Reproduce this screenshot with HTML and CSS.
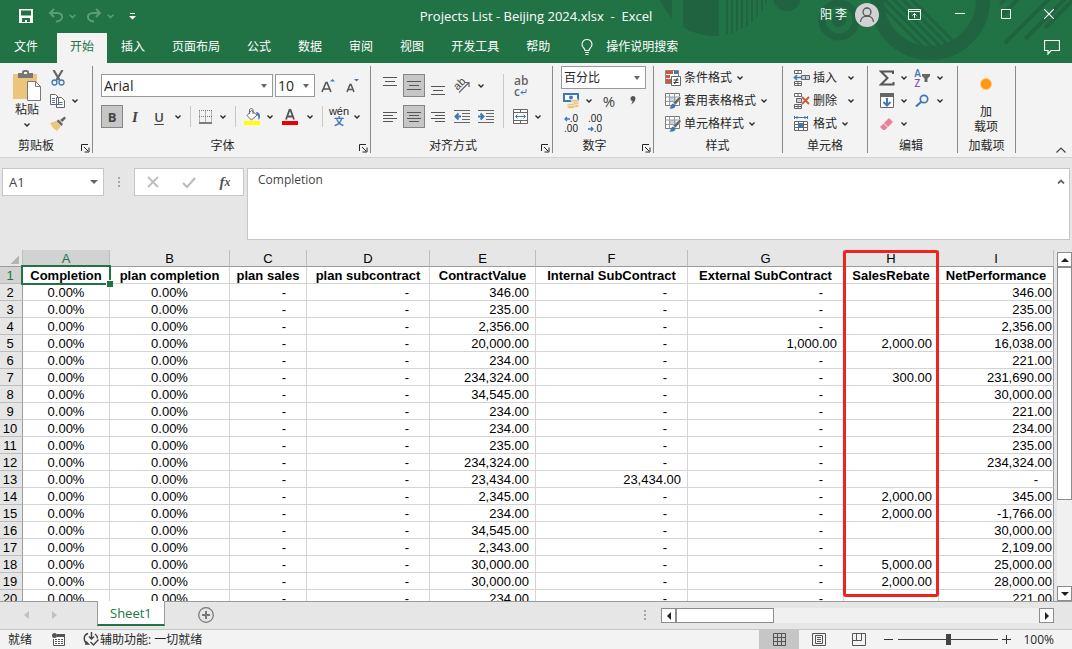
FILE: index.html
```html
<!DOCTYPE html>
<html lang="zh-CN">
<head>
<meta charset="utf-8">
<title>Projects List - Beijing 2024.xlsx - Excel</title>
<link rel="stylesheet" href="styles.css">
</head>
<body>
<svg class="defs" aria-hidden="true">
  <symbol id="chev" viewBox="0 0 8 8"><path d="M1.500 2.500 4 5l2.500-2.500" fill="none" stroke="currentColor" stroke-width="1.300"/></symbol>
  <symbol id="launch" viewBox="0 0 9 9"><path d="M.5 7V.5H7M3 3l4 4M8 3.500V8H3.500" fill="none" stroke="currentColor"/></symbol>
  <symbol id="tablebrush" viewBox="0 0 16 16"><path d="M.5.5h14v12H.5z" fill="#fff" stroke="#777"/><path d="M4 4h7v5H4z" fill="#c3d3e6"/><path d="M.5 4h14M.5 8.500h14M4.500.5v12M9.500.5v12" stroke="#999" fill="none"/><path d="M15 3 8 9.500l2.500 2.500L16 5.500z" fill="#666" stroke="#f3f3f3" stroke-width=".5"/><path d="M4 15.500c2 0 1.500-4.500 4-5l2.500 2c0 3-3.500 3.500-6.500 3z" fill="#3f78b5"/></symbol>
</svg>

<header class="top">
  <svg class="decor" width="432" height="63" viewBox="640 0 432 63" aria-hidden="true">
    <defs>
      <clipPath id="c1"><circle cx="714" cy="-22" r="58"/></clipPath>
      <clipPath id="c2"><circle cx="930" cy="0" r="46"/></clipPath>
    </defs>
    <g fill="#1f6340" clip-path="url(#c1)">
      <path d="M656 0h16v40h-16zM683 0h36v40h-36zM726 0h2v40h-2zM731 0h2v40h-2zM736 0h2v40h-2zM741 0h2v40h-2zM746 0h2v40h-2zM751 0h2v40h-2zM756 0h2v40h-2zM761 0h2v40h-2zM765 0h2v40h-2z"/>
    </g>
    <circle cx="787" cy="-3" r="14" fill="#1f6340"/>
    <circle cx="839" cy="20" r="17" fill="none" stroke="#1f6340" stroke-width="7"/>
    <circle cx="839" cy="20" r="7" fill="#1f6340"/>
    <circle cx="930" cy="0" r="53" fill="none" stroke="#1f6340" stroke-width="14"/>
    <g stroke="#1f6340" stroke-width="3" clip-path="url(#c2)"><path d="M870-6l60 60M879-6l60 60M888-6l60 60M897-6l60 60M906-6l60 60"/></g>
    <g stroke="#1f6340" stroke-width="4"><path d="M1000 4l8-8M1002 15l20-20M1005 43l48-48M1025 39l44-44M1045 28l32-32"/></g>
  </svg>

  <div class="titlebar">
    <div class="qat">
      <button class="qbtn" aria-label="保存"><svg width="16" height="16" viewBox="0 0 16 16"><path d="M1 1h14v14H1z" fill="#fff"/><path d="M3 2.500h10v5H3zM4 10h8v4H9v-2H7v2H4z" fill="#217346"/></svg></button>
      <button class="qbtn dim undo" aria-label="撤消"><svg width="16" height="16" viewBox="0 0 16 16"><path d="M6 1 2 5l4 4M2 5h7c7 0 7 8-1 8.500" fill="none" stroke="currentColor" stroke-width="2"/></svg></button>
      <button class="qchev dim" aria-label="撤消列表"><svg width="9" height="9"><use href="#chev"/></svg></button>
      <button class="qbtn dim redo" aria-label="恢复"><svg width="16" height="16" viewBox="0 0 16 16"><path d="M10 1l4 4-4 4M14 5H7c-7 0-7 8 1 8.500" fill="none" stroke="currentColor" stroke-width="2"/></svg></button>
      <button class="qchev dim" aria-label="恢复列表"><svg width="9" height="9"><use href="#chev"/></svg></button>
      <button class="qbtn custom" aria-label="自定义快速访问工具栏"><svg width="7" height="7" viewBox="0 0 7 7"><path d="M1 0h5v1H1zM0 3h7L3.500 6.500z" fill="#fff"/></svg></button>
    </div>
    <h1 class="title">Projects List - Beijing 2024.xlsx&nbsp; -&nbsp; Excel</h1>
    <div class="winctl">
      <span class="user">阳 李</span>
      <svg class="avatar" width="24" height="24" viewBox="0 0 24 24"><circle cx="12" cy="12" r="12" fill="#d2d2d2"/><circle cx="12" cy="9" r="4" fill="none" stroke="#555" stroke-width="1.300"/><path d="M5.500 19c.5-8 12.500-8 13 0" fill="none" stroke="#555" stroke-width="1.300"/></svg>
      <button class="wbtn" aria-label="功能区显示选项"><svg width="13" height="11" viewBox="0 0 13 11"><path d="M.5.500h12v10H.5zM.5 2.500h12M6.500 9V4.500M4.500 6.500l2-2 2 2" fill="none" stroke="#fff"/></svg></button>
      <button class="wbtn" aria-label="最小化"><svg width="10" height="10"><path d="M0 4.500h10" stroke="#fff"/></svg></button>
      <button class="wbtn" aria-label="最大化"><svg width="10" height="10"><path d="M.5.500h9v9h-9z" fill="none" stroke="#fff"/></svg></button>
      <button class="wbtn close" aria-label="关闭"><svg width="10" height="10"><path d="M0 0l10 10M10 0 0 10" stroke="#fff" stroke-width="1.200"/></svg></button>
    </div>
  </div>

  <nav class="tabs">
    <button class="tab file">文件</button>
    <button class="tab active">开始</button>
    <button class="tab">插入</button>
    <button class="tab">页面布局</button>
    <button class="tab">公式</button>
    <button class="tab">数据</button>
    <button class="tab">审阅</button>
    <button class="tab">视图</button>
    <button class="tab">开发工具</button>
    <button class="tab">帮助</button>
    <button class="tell"><svg width="12" height="16" viewBox="0 0 12 16"><path d="M4 11.500C4 9 1 8.500 1 5.500a5 5 0 0 1 10 0C11 8.500 8 9 8 11.500zM4 13.500h4M4.500 15.500h3" fill="none" stroke="#fff" stroke-width="1.100"/></svg>操作说明搜索</button>
    <button class="comment" aria-label="批注"><svg width="16" height="15" viewBox="0 0 16 15"><path d="M.5.500h15v10H7l-3 3.500v-3.500H.5z" fill="none" stroke="#fff" stroke-width="1.200"/></svg></button>
  </nav>
</header>

<section class="ribbon">
  <div class="group g-clip">
    <div class="gbody">
      <button class="paste">
        <svg width="30" height="31" viewBox="0 0 30 31"><path d="M1 4h24v25H1z" fill="#ecc57c"/><path d="M6 3h4V1l2-1h3l2 1v2h4v5H6z" fill="#777"/><path d="M12 2h3v2h-3z" fill="#f3f3f3"/><path d="M15.500 11.500h8l5 5v14h-13z" fill="#fff" stroke="#777"/><path d="M23.500 11.500v5h5" fill="none" stroke="#777"/></svg>
        <span>粘贴</span>
        <svg width="8" height="8"><use href="#chev"/></svg>
      </button>
      <div class="rows">
        <div class="row"><button class="t16" aria-label="剪切"><svg width="16" height="16" viewBox="0 0 16 16"><path d="M3.500 0l6 10M12.500 0l-6 10" stroke="#666" stroke-width="2.200"/><circle cx="4.500" cy="12.500" r="2.500" fill="none" stroke="#3f78b5" stroke-width="1.300"/><circle cx="11.500" cy="12.500" r="2.500" fill="none" stroke="#3f78b5" stroke-width="1.300"/></svg></button></div>
        <div class="row"><button class="t16" aria-label="复制"><svg width="16" height="16" viewBox="0 0 16 16"><path d="M.5 1.500h5l3 3v7h-8zM6.500 4.500h5l3 3v7h-8z" fill="#fff" stroke="#666"/><path d="M2 5.500h3M2 7.500h3M2 9.500h3M8.500 9.500h4M8.500 11.500h4" stroke="#3f78b5"/></svg></button><button class="chev wide" aria-label="复制选项"><svg width="8" height="8"><use href="#chev"/></svg></button></div>
        <div class="row"><button class="t16" aria-label="格式刷"><svg width="16" height="16" viewBox="0 0 16 16"><path d="M0 7l6-2 5 5-4 5c-2-1-5-4-7-8z" fill="#ecc57c"/><path d="M6.500 5l2-1.500 4.500 4.500-1.500 2zM10 4l4.500-3.500L16 2l-3.500 4z" fill="#666"/></svg></button></div>
      </div>
    </div>
    <div class="glabel">剪贴板<button class="launch" aria-label="剪贴板设置"><svg width="9" height="9"><use href="#launch"/></svg></button></div>
  </div>

  <div class="group g-font">
    <div class="gbody two">
      <div class="row">
        <span class="combo w-font"><select aria-label="字体"><option>Arial</option></select></span>
        <span class="combo w-size"><select aria-label="字号"><option>10</option></select></span>
        <button class="t26" aria-label="增大字号"><svg width="14" height="15" viewBox="0 0 14 15"><path d="M1 14 5 4.500h1L10 14M2.500 11h6" fill="none" stroke="#555" stroke-width="1.600"/><path d="M9 3.500 11.500 1 14 3.500z" fill="#3f78b5"/></svg></button>
        <button class="t22" aria-label="减小字号"><svg width="14" height="15" viewBox="0 0 14 15"><path d="M2 14 5 6.500h1L9 14M3 11.500h5" fill="none" stroke="#555" stroke-width="1.500"/><path d="M9 1h5l-2.500 2.500z" fill="#3f78b5"/></svg></button>
      </div>
      <div class="row">
        <button class="t22 on letter b">B</button>
        <button class="t24 letter i">I</button>
        <button class="t24 letter u">U</button>
        <button class="chev" aria-label="下划线选项"><svg width="8" height="8"><use href="#chev"/></svg></button>
        <span class="sep"></span>
        <button class="t20" aria-label="边框"><svg width="14" height="14" viewBox="0 0 14 14"><path d="M.5.500v12M12.500.500v12M6.500.500v12M0 .5h13M0 6.500h13" stroke="#777" stroke-dasharray="1 1"/><path d="M0 13h13" stroke="#555" stroke-width="1.500"/></svg></button>
        <button class="chev" aria-label="边框选项"><svg width="8" height="8"><use href="#chev"/></svg></button>
        <span class="sep"></span>
        <button class="t22" aria-label="填充颜色"><svg width="17" height="17" viewBox="0 0 17 17"><path d="M7.500 2.500 13 7l-5.500 5L3 7.500z" fill="#fff" stroke="#666"/><path d="M5.500 6V2c0-2 3.500-2 3.500 0v4" fill="none" stroke="#666"/><path d="M12 4c4 0 5 4 3 8-1-1 0-4-2-5z" fill="#3f78b5"/><path d="M0 13h16v4H0z" fill="#ff0"/></svg></button>
        <button class="chev" aria-label="填充颜色选项"><svg width="8" height="8"><use href="#chev"/></svg></button>
        <button class="t26" aria-label="字体颜色"><svg width="16" height="17" viewBox="0 0 16 17"><path d="M4 11.500 7.500 2h1L12 11.500M5.500 8.500h5" fill="none" stroke="#555" stroke-width="1.800"/><path d="M0 13h16v4H0z" fill="#e00"/></svg></button>
        <button class="chev" aria-label="字体颜色选项"><svg width="8" height="8"><use href="#chev"/></svg></button>
        <span class="sep"></span>
        <button class="t22 wen" aria-label="拼音"><span>wén</span><span class="zi">文</span></button>
        <button class="chev" aria-label="拼音选项"><svg width="8" height="8"><use href="#chev"/></svg></button>
      </div>
    </div>
    <div class="glabel">字体<button class="launch" aria-label="字体设置"><svg width="9" height="9"><use href="#launch"/></svg></button></div>
  </div>

  <div class="group g-align">
    <div class="gbody two">
      <div class="cols">
        <div class="stack">
          <div class="row">
            <button class="t24" aria-label="顶端对齐"><svg width="14" height="18"><path d="M0 .5h14M2 4.500h10M0 8.500h14" stroke="#555"/></svg></button>
            <button class="t22 on m1" aria-label="垂直居中"><svg width="14" height="18"><path d="M0 4.500h14M2 8.500h10M0 12.500h14" stroke="#555"/></svg></button>
            <button class="t24" aria-label="底端对齐"><svg width="14" height="18"><path d="M0 9.500h14M2 13.500h10M0 17.500h14" stroke="#555"/></svg></button>
            <button class="t24" aria-label="方向"><svg class="vis" width="16" height="17" viewBox="0 0 16 17"><text x="0" y="11" transform="rotate(-45 5 8)" class="svgab">ab</text><path d="M5 15.500 14.500 6M10.500 5.500h4.500V10" fill="none" stroke="#666" stroke-width="1.200"/></svg></button>
            <button class="chev" aria-label="方向选项"><svg width="8" height="8"><use href="#chev"/></svg></button>
          </div>
          <div class="row">
            <button class="t24" aria-label="左对齐"><svg width="14" height="12"><path d="M0 1.500h14M0 4.500h10M0 7.500h14M0 10.500h10" stroke="#555"/></svg></button>
            <button class="t22 on m1" aria-label="居中"><svg width="14" height="12"><path d="M0 1.500h14M2 4.500h10M0 7.500h14M2 10.500h10" stroke="#555"/></svg></button>
            <button class="t24" aria-label="右对齐"><svg width="14" height="12"><path d="M0 1.500h14M4 4.500h10M0 7.500h14M4 10.500h10" stroke="#555"/></svg></button>
            <button class="t24" aria-label="减少缩进"><svg width="16" height="13"><path d="M0 .5h16M8 3.500h8M8 6.500h8M8 9.500h8M0 12.500h16" stroke="#666"/><path d="M7 6.500H2M4.500 3.500l-3 3 3 3" fill="none" stroke="#3f78b5" stroke-width="2"/></svg></button>
            <button class="t24" aria-label="增加缩进"><svg width="16" height="13"><path d="M0 .5h16M8 3.500h8M8 6.500h8M8 9.500h8M0 12.500h16" stroke="#666"/><path d="M0 6.500h5M2.500 3.500l3 3-3 3" fill="none" stroke="#3f78b5" stroke-width="2"/></svg></button>
          </div>
        </div>
        <span class="sep tall"></span>
        <div class="stack">
          <div class="row"><button class="t22 wrap" aria-label="自动换行"><span>ab</span><span>c<svg width="7" height="8"><path d="M6 0v3.500H1M3 1.500l-2 2 2 2" fill="none" stroke="#3f78b5"/></svg></span></button></div>
          <div class="row"><button class="t22" aria-label="合并后居中"><svg width="15" height="15"><path d="M.5.500h14v14H.5z" fill="#fff" stroke="#666"/><path d="M.5 3.500h14M.5 11.500h14M7.500.500v3M7.500 11.500v3" stroke="#666"/><path d="M2.500 7.500h10M4.500 5.500l-2 2 2 2M10.500 5.500l2 2-2 2" fill="none" stroke="#3f78b5"/></svg></button><button class="chev" aria-label="合并选项"><svg width="8" height="8"><use href="#chev"/></svg></button></div>
        </div>
      </div>
    </div>
    <div class="glabel">对齐方式<button class="launch" aria-label="对齐设置"><svg width="9" height="9"><use href="#launch"/></svg></button></div>
  </div>

  <div class="group g-num">
    <div class="gbody">
      <div class="rows">
        <div class="row"><span class="combo w-num"><select aria-label="数字格式"><option>百分比</option></select></span></div>
        <div class="row"><button class="t22" aria-label="会计数字格式"><svg width="17" height="16" viewBox="0 0 17 16"><path d="M0 0h16v9H0z" fill="#3f78b5"/><path d="M2 2h12v5H2z" fill="#fff"/><circle cx="8" cy="4.500" r="2" fill="#3f78b5"/><g fill="#ecc57c" stroke="#f3f3f3" stroke-width=".6"><ellipse cx="12" cy="8" rx="4" ry="1.700"/><ellipse cx="12" cy="10.500" rx="4" ry="1.700"/><ellipse cx="12" cy="13" rx="4" ry="1.700"/><ellipse cx="8" cy="12" rx="4" ry="1.700"/><ellipse cx="8" cy="14" rx="4" ry="1.700"/></g></svg></button><button class="chev" aria-label="会计格式选项"><svg width="8" height="8"><use href="#chev"/></svg></button><button class="t26 pct">%</button><button class="t22 comma" aria-label="千位分隔"><svg width="6" height="9"><path d="M3 0c4 0 3 6-2 8.500C2 7 2.500 6 2.500 5-.5 5 0 0 3 0z" fill="#555"/></svg></button></div>
        <div class="row"><button class="t22 dec" aria-label="增加小数位数"><span><svg width="6" height="6"><path d="M6 3H1M3 1 1 3l2 2" fill="none" stroke="#3f78b5" stroke-width="1.300"/></svg>.0</span><span>.00</span></button><button class="t24 dec" aria-label="减少小数位数"><span>.00</span><span><svg width="6" height="6"><path d="M0 3h5M3 1l2 2-2 2" fill="none" stroke="#3f78b5" stroke-width="1.300"/></svg>.0</span></button></div>
      </div>
    </div>
    <div class="glabel">数字<button class="launch" aria-label="数字设置"><svg width="9" height="9"><use href="#launch"/></svg></button></div>
  </div>

  <div class="group g-style">
    <div class="gbody">
      <div class="rows">
        <button class="cmd"><svg width="16" height="16" viewBox="0 0 16 16"><path d="M.5.500h13v13H.5z" fill="#fff" stroke="#888"/><path d="M1 1h7v3H1zM1 5h4v3H1zM1 9h6v4H1z" fill="#d0573c"/><path d="M9 1h4v3H9z" fill="#3f78b5"/><path d="M6.500 6.500h9v9h-9z" fill="#fff" stroke="#666"/><path d="M8.500 10h5M8.500 12.500h5M12.500 8l-3 6" stroke="#333"/></svg>条件格式<svg class="cv" width="8" height="8"><use href="#chev"/></svg></button>
        <button class="cmd"><svg width="16" height="16"><use href="#tablebrush"/></svg>套用表格格式<svg class="cv" width="8" height="8"><use href="#chev"/></svg></button>
        <button class="cmd"><svg width="16" height="16"><use href="#tablebrush"/></svg>单元格样式<svg class="cv" width="8" height="8"><use href="#chev"/></svg></button>
      </div>
    </div>
    <div class="glabel">样式</div>
  </div>

  <div class="group g-cell">
    <div class="gbody">
      <div class="rows">
        <button class="cmd"><svg width="17" height="16" viewBox="0 0 17 16"><path d="M1.500.500h7v3h-7zM5 .5v3M1.500 11.500h7v4h-7zM5 11.500v4M1.500 13.500h7M1 7.500h3" fill="#fff" stroke="#666"/><path d="M8.500 5.500h8v4h-8zM12.500 5.500v4" fill="#c3d3e6" stroke="#666"/><path d="M8 7.500H2M4 5 1.500 7.500 4 10" fill="none" stroke="#3f78b5" stroke-width="1.600"/></svg>插入<svg class="cv far" width="8" height="8"><use href="#chev"/></svg></button>
        <button class="cmd"><svg width="17" height="16" viewBox="0 0 17 16"><path d="M1.500.500h7v3h-7zM5 .5v3M1.500 11.500h7v4h-7zM5 11.500v4M1.500 13.500h7" fill="#fff" stroke="#666"/><path d="M3.500 5.500h5v4h-5z" fill="#c3d3e6" stroke="#666"/><path d="M9 4l7 7M16 4l-7 7" stroke="#d0573c" stroke-width="1.800"/></svg>删除<svg class="cv far" width="8" height="8"><use href="#chev"/></svg></button>
        <button class="cmd"><svg width="17" height="16" viewBox="0 0 17 16"><path d="M1.500 5.500h13v9h-13zM1.500 8.500h13M1.500 11.500h13M5.500 5.500v9M10.500 5.500v9" fill="#fff" stroke="#666"/><path d="M5 7h5v4H5z" fill="#3f78b5"/><path d="M2 1.500h12M1.500 0v3M14.500 0v3M4.500 0 3 1.500 4.500 3M11.500 0 13 1.500 11.500 3" fill="none" stroke="#3f78b5"/></svg>格式<svg class="cv" width="8" height="8"><use href="#chev"/></svg></button>
      </div>
    </div>
    <div class="glabel">单元格</div>
  </div>

  <div class="group g-edit">
    <div class="gbody">
      <div class="rows">
        <div class="row"><button class="t20" aria-label="求和"><svg width="16" height="16" viewBox="0 0 16 16"><path d="M14 4V1.500H2L8.500 8 2 14.500h12.500V12" fill="none" stroke="#555" stroke-width="2"/></svg></button><button class="chev" aria-label="求和选项"><svg width="8" height="8"><use href="#chev"/></svg></button><button class="t22 sort" aria-label="排序和筛选"><span class="az"><b>A</b><i>Z</i></span><svg width="8" height="8"><path d="M0 0h8v2L5.500 4.500V8h-3V4.500L0 2z" fill="#666"/></svg></button><button class="chev" aria-label="排序选项"><svg width="8" height="8"><use href="#chev"/></svg></button></div>
        <div class="row"><button class="t20" aria-label="填充"><svg width="14" height="15"><path d="M.5.500h13v14H.5z" fill="#fff" stroke="#666"/><path d="M0 0h14v4H0z" fill="#666"/><path d="M7 5v7M3.500 9 7 12.500 10.500 9" fill="none" stroke="#3f78b5" stroke-width="2"/></svg></button><button class="chev" aria-label="填充选项"><svg width="8" height="8"><use href="#chev"/></svg></button><button class="t22" aria-label="查找和选择"><svg width="14" height="14"><circle cx="9" cy="5" r="3.700" fill="none" stroke="#3f78b5" stroke-width="1.700"/><path d="M6.500 7.500 1 12.500" stroke="#3f78b5" stroke-width="2.200"/></svg></button><button class="chev" aria-label="查找选项"><svg width="8" height="8"><use href="#chev"/></svg></button></div>
        <div class="row"><button class="t20" aria-label="清除"><svg width="14" height="14"><path d="M9 1l4 4-5 5-4-4z" fill="#e8829a"/><path d="M3.500 6.500l4 4L5 13H3L.5 10.500v-1z" fill="#e8829a"/></svg></button><button class="chev" aria-label="清除选项"><svg width="8" height="8"><use href="#chev"/></svg></button></div>
      </div>
    </div>
    <div class="glabel">编辑</div>
  </div>

  <div class="group g-add">
    <button class="addin"><span class="dot"></span><span>加<br>载项</span></button>
    <div class="glabel">加载项</div>
  </div>
  <button class="collapse" aria-label="折叠功能区"><svg width="10" height="6"><path d="M.5 5.500 5 1l4.500 4.500" fill="none" stroke="#444" stroke-width="1.200"/></svg></button>
</section>

<section class="fbar">
  <div class="namebox"><input type="text" value="A1" aria-label="名称框"><span class="tri"></span></div>
  <span class="dots"><i></i><i></i><i></i></span>
  <div class="fxbox">
    <button aria-label="取消"><svg width="12" height="12"><path d="M1 1l10 10M11 1 1 11" stroke="#bdbdbd" stroke-width="1.800"/></svg></button>
    <button aria-label="输入"><svg width="14" height="11"><path d="M1 6l4 4 8-9" fill="none" stroke="#bdbdbd" stroke-width="2.200"/></svg></button>
    <button class="fx" aria-label="插入函数">f<small>x</small></button>
  </div>
  <div class="formula"><textarea aria-label="编辑栏">Completion</textarea><button aria-label="折叠编辑栏"><svg width="8" height="5"><path d="M1 4.500 4 1.500l3 3" fill="none" stroke="#666" stroke-width="1.800"/></svg></button></div>
</section>

<main class="sheet">
  <div class="gridwrap">
    <table class="grid">
      <colgroup><col class="k0"><col class="kA"><col class="kB"><col class="kC"><col class="kD"><col class="kE"><col class="kF"><col class="kG"><col class="kH"><col class="kI"></colgroup>
      <thead><tr><th class="corner"><span></span></th><th class="sel">A</th><th>B</th><th>C</th><th>D</th><th>E</th><th>F</th><th>G</th><th>H</th><th>I</th></tr></thead>
      <tbody>
        <tr class="heads"><th class="sel">1</th><td class="cur">Completion</td><td>plan completion</td><td>plan sales</td><td>plan subcontract</td><td>ContractValue</td><td>Internal SubContract</td><td>External SubContract</td><td>SalesRebate</td><td>NetPerformance</td></tr>
        <tr><th>2</th><td>0.00%</td><td>0.00%</td><td class="d">-</td><td class="d">-</td><td>346.00</td><td class="d">-</td><td class="d">-</td><td></td><td>346.00</td></tr>
        <tr><th>3</th><td>0.00%</td><td>0.00%</td><td class="d">-</td><td class="d">-</td><td>235.00</td><td class="d">-</td><td class="d">-</td><td></td><td>235.00</td></tr>
        <tr><th>4</th><td>0.00%</td><td>0.00%</td><td class="d">-</td><td class="d">-</td><td>2,356.00</td><td class="d">-</td><td class="d">-</td><td></td><td>2,356.00</td></tr>
        <tr><th>5</th><td>0.00%</td><td>0.00%</td><td class="d">-</td><td class="d">-</td><td>20,000.00</td><td class="d">-</td><td>1,000.00</td><td>2,000.00</td><td>16,038.00</td></tr>
        <tr><th>6</th><td>0.00%</td><td>0.00%</td><td class="d">-</td><td class="d">-</td><td>234.00</td><td class="d">-</td><td class="d">-</td><td></td><td>221.00</td></tr>
        <tr><th>7</th><td>0.00%</td><td>0.00%</td><td class="d">-</td><td class="d">-</td><td>234,324.00</td><td class="d">-</td><td class="d">-</td><td>300.00</td><td>231,690.00</td></tr>
        <tr><th>8</th><td>0.00%</td><td>0.00%</td><td class="d">-</td><td class="d">-</td><td>34,545.00</td><td class="d">-</td><td class="d">-</td><td></td><td>30,000.00</td></tr>
        <tr><th>9</th><td>0.00%</td><td>0.00%</td><td class="d">-</td><td class="d">-</td><td>234.00</td><td class="d">-</td><td class="d">-</td><td></td><td>221.00</td></tr>
        <tr><th>10</th><td>0.00%</td><td>0.00%</td><td class="d">-</td><td class="d">-</td><td>234.00</td><td class="d">-</td><td class="d">-</td><td></td><td>234.00</td></tr>
        <tr><th>11</th><td>0.00%</td><td>0.00%</td><td class="d">-</td><td class="d">-</td><td>235.00</td><td class="d">-</td><td class="d">-</td><td></td><td>235.00</td></tr>
        <tr><th>12</th><td>0.00%</td><td>0.00%</td><td class="d">-</td><td class="d">-</td><td>234,324.00</td><td class="d">-</td><td class="d">-</td><td></td><td>234,324.00</td></tr>
        <tr><th>13</th><td>0.00%</td><td>0.00%</td><td class="d">-</td><td class="d">-</td><td>23,434.00</td><td>23,434.00</td><td class="d">-</td><td></td><td class="d">-</td></tr>
        <tr><th>14</th><td>0.00%</td><td>0.00%</td><td class="d">-</td><td class="d">-</td><td>2,345.00</td><td class="d">-</td><td class="d">-</td><td>2,000.00</td><td>345.00</td></tr>
        <tr><th>15</th><td>0.00%</td><td>0.00%</td><td class="d">-</td><td class="d">-</td><td>234.00</td><td class="d">-</td><td class="d">-</td><td>2,000.00</td><td>-1,766.00</td></tr>
        <tr><th>16</th><td>0.00%</td><td>0.00%</td><td class="d">-</td><td class="d">-</td><td>34,545.00</td><td class="d">-</td><td class="d">-</td><td></td><td>30,000.00</td></tr>
        <tr><th>17</th><td>0.00%</td><td>0.00%</td><td class="d">-</td><td class="d">-</td><td>2,343.00</td><td class="d">-</td><td class="d">-</td><td></td><td>2,109.00</td></tr>
        <tr><th>18</th><td>0.00%</td><td>0.00%</td><td class="d">-</td><td class="d">-</td><td>30,000.00</td><td class="d">-</td><td class="d">-</td><td>5,000.00</td><td>25,000.00</td></tr>
        <tr><th>19</th><td>0.00%</td><td>0.00%</td><td class="d">-</td><td class="d">-</td><td>30,000.00</td><td class="d">-</td><td class="d">-</td><td>2,000.00</td><td>28,000.00</td></tr>
        <tr><th>20</th><td>0.00%</td><td>0.00%</td><td class="d">-</td><td class="d">-</td><td>234.00</td><td class="d">-</td><td class="d">-</td><td></td><td>221.00</td></tr>
      </tbody>
    </table>
    <div class="selection"></div>
    <div class="redbox"></div>
  </div>
  <div class="vscroll">
    <button class="sb up" aria-label="向上滚动"><span></span></button>
    <div class="vtrack"><div class="vthumb"></div></div>
    <button class="sb down" aria-label="向下滚动"><span></span></button>
  </div>
</main>

<div class="tabbar">
  <button class="nav prev" aria-label="上一个工作表"><span></span></button>
  <button class="nav next" aria-label="下一个工作表"><span></span></button>
  <button class="sheettab">Sheet1</button>
  <button class="addsheet" aria-label="新工作表"><svg width="16" height="16"><circle cx="8" cy="8" r="7.300" fill="none" stroke="#777" stroke-width="1.200"/><path d="M8 4v8M4 8h8" stroke="#777" stroke-width="2"/></svg></button>
  <span class="dots low"><i></i><i></i><i></i></span>
  <div class="hscroll">
    <button class="sb left" aria-label="向左滚动"><span></span></button>
    <div class="htrack"><div class="hthumb"></div></div>
    <button class="sb right" aria-label="向右滚动"><span></span></button>
  </div>
</div>

<footer class="status">
  <span class="ready">就绪</span>
  <button class="macro" aria-label="录制宏"><svg width="13" height="13"><path d="M5 1.500h7.500v11h-11V6" fill="#fff" stroke="#555"/><path d="M5 1h8v3H5z" fill="#555"/><circle cx="2.500" cy="2.500" r="2.500" fill="#555"/><path d="M3 6.500h2M6 6.500h2M9 6.500h2M3 8.500h2M6 8.500h2M9 8.500h2M3 10.500h2M6 10.500h2M9 10.500h2" stroke="#555"/></svg></button>
  <button class="acc"><svg width="17" height="15"><path d="M5 1.500C0 3 0 10 5 12M12 2c2 1.500 2.500 3 2.500 4.500M8.500 0v7M6 4.500 8.500 7 11 4.500M3 9.500l2.500 2.500H2M7.500 10l3 3 5-5.500" fill="none" stroke="#444" stroke-width="1.400"/></svg>辅助功能: 一切就绪</button>
  <div class="views">
    <button class="view on" aria-label="普通"><svg width="13" height="13"><path d="M.5.500h12v12H.5zM4.500.500v12M8.500.500v12M.5 4.500h12M.5 8.500h12" fill="none" stroke="#555"/></svg></button>
    <button class="view" aria-label="页面布局"><svg width="14" height="13"><path d="M.5.500h13v12H.5zM3.500 2.500h7v8h-7zM5 4.500h4M5 6.500h4M5 8.500h4" fill="none" stroke="#555"/></svg></button>
    <button class="view" aria-label="分页预览"><svg width="14" height="13"><path d="M.5.500h13v12H.5zM4.500.500v7M9.500.500v7M.5 7.500h9" fill="none" stroke="#555"/></svg></button>
  </div>
  <button class="zb" aria-label="缩小"><svg width="9" height="9"><path d="M0 4.500h9" stroke="#333"/></svg></button>
  <input class="zoom" type="range" min="0" max="100" value="50" aria-label="显示比例">
  <button class="zb plus" aria-label="放大"><svg width="9" height="9"><path d="M0 4.500h9M4.500 0v9" stroke="#333"/></svg></button>
  <span class="pc">100%</span>
</footer>
</body>
</html>
```
FILE: styles.css
```css
* { box-sizing: border-box; }
body {
  margin: 0;
  height: 100vh;
  display: flex;
  flex-direction: column;
  overflow: hidden;
  background: #e6e6e6;
  color: #262626;
  font: 12px/16px "Open Sans", "Noto Sans CJK SC", sans-serif;
}
button, input, select, textarea { font: inherit; color: inherit; margin: 0; padding: 0; border: 0; background: none; border-radius: 0; }
button { display: flex; align-items: center; justify-content: center; flex: none; }
svg { display: block; flex: none; }
.defs { position: absolute; width: 0; height: 0; }
.vis { overflow: visible; }

/* header */
.top { position: relative; background: #217346; color: #fff; flex: none; }
.decor { position: absolute; top: 0; right: 0; }
.titlebar { position: relative; display: grid; grid-template-columns: 1fr auto 1fr; height: 32px; align-items: center; }
.qat { display: flex; align-items: center; padding-left: 18px; }
.qbtn { width: 16px; height: 24px; }
.qchev { width: 16px; height: 24px; }
.undo { margin-left: 14px; }
.redo { margin-left: 6px; }
.custom { margin-left: 6px; }
.dim { color: #5d9c79; }
.title { margin: 0; font-size: 13px; font-weight: 400; white-space: nowrap; }
.winctl { display: flex; align-items: center; justify-content: flex-end; height: 30px; align-self: start; }
.user { margin-right: 8px; }
.avatar { margin-right: 12px; }
.wbtn { width: 46px; height: 30px; padding-bottom: 2px; }
.close { width: 43px; padding-right: 3px; }
.tabs { position: relative; display: flex; padding-top: 1px; height: 31px; gap: 1px; }
.tab { padding: 0 13px 2px; height: 30px; }
.file { padding-left: 14px; margin-right: 5px; }
.active { background: #f3f3f3; color: #217346; }
.tell { gap: 13px; padding: 0 0 2px 17px; }
.comment { margin-left: auto; padding: 0 12px 2px 0; }

/* ribbon */
.ribbon { display: flex; flex: none; background: #f3f3f3; border-bottom: 1px solid #d2d2d2; padding: 3px 0 4px; min-height: 95px; }
.group { display: flex; flex-direction: column; flex: none; border-right: 1px solid #8a8a8a; }
.gbody { display: flex; flex: 1; }
.two { flex-direction: column; gap: 8px; padding-top: 8px; }
.two .row { height: 23px; }
.glabel { position: relative; text-align: center; height: 14px; line-height: 14px; }
.launch { position: absolute; right: 2px; bottom: 0; }
.g-clip { width: 93px; padding-left: 12px; }
.g-clip .glabel { padding-right: 32px; }
.g-font { width: 278px; padding-left: 8px; }
.g-font .glabel { padding-right: 26px; }
.g-align { width: 182px; padding-left: 7px; }
.g-align .glabel { padding-right: 24px; }
.g-num { width: 101px; padding-left: 7px; }
.g-num .glabel { padding-right: 24px; }
.g-style { width: 129px; padding-left: 11px; }
.g-style .glabel { padding-right: 12px; }
.g-cell { width: 85px; padding-left: 10px; }
.g-cell .glabel { padding-right: 10px; }
.g-edit { width: 90px; padding-left: 9px; }
.g-edit .glabel { padding-right: 12px; }
.g-add { width: 58px; }
.collapse { margin-left: auto; align-self: flex-end; padding: 0 6px 0 0; }
.paste { flex-direction: column; justify-content: flex-start; padding-top: 4px; width: 30px; margin-right: 8px; }
.paste svg:last-child { margin-top: 3px; }
.paste span { margin-top: 1px; }
.rows { display: flex; flex-direction: column; }
.rows .row, .rows .cmd { height: 23px; }
.row { display: flex; align-items: center; }
.stack { display: flex; flex-direction: column; gap: 8px; }
.cols { display: flex; }
.t16 { width: 16px; height: 23px; }
.t20 { width: 20px; height: 23px; }
.t22 { width: 22px; height: 23px; }
.t24 { width: 24px; height: 23px; }
.t26 { width: 26px; height: 23px; }
.chev { width: 14px; height: 23px; }
.wide { width: 18px; }
.on { background: #c6c6c6; border: 1px solid #858585; }
.m1 { margin: 0 1px; }
.sep { width: 11px; height: 21px; background: linear-gradient(#c9c9c9, #c9c9c9) center / 1px 100% no-repeat; }
.tall { height: 54px; }
.letter { color: #444; font-size: 13px; }
.b { font-weight: 700; }
.i { font-family: "Liberation Serif", serif; font-style: italic; font-weight: 700; font-size: 15px; }
.u { font-weight: 600; text-decoration: underline; text-underline-offset: 2px; }
.combo { position: relative; display: block; background: #fff; border: 1px solid #999; height: 23px; }
.combo select { appearance: none; width: 100%; height: 21px; padding-left: 2px; outline: 0; font-size: 14px; line-height: 20px; }
.combo::after, .tri { content: ""; position: absolute; right: 5px; top: 9px; border: 3px solid transparent; border-top: 4px solid #666; border-bottom: 0; pointer-events: none; }
.w-font { width: 172px; margin-right: 2px; }
.w-size { width: 40px; }
.w-num { width: 85px; margin-left: 1px; }
.w-num select { font-size: 12px; }
.wen { flex-direction: column; font: 11px/11px "Liberation Sans", "Noto Sans CJK SC", sans-serif; }
.zi { color: #3f78b5; font-size: 10px; font-weight: 700; line-height: 10px; }
.svgab { font: 11px "Liberation Sans", sans-serif; fill: #444; }
.wrap { flex-direction: column; align-items: flex-start; padding-left: 5px; font: 600 12px/11px "Open Sans", sans-serif; color: #666; }
.wrap span { display: flex; align-items: flex-end; }
.pct { font-size: 15px; color: #444; }
.comma { height: 23px; }
.dec { flex-direction: column; align-items: flex-end; font: 10px/10px "Liberation Sans", sans-serif; color: #222; padding-right: 4px; }
.dec span { display: flex; align-items: center; }
.cmd { justify-content: flex-start; gap: 3px; }
.cv { margin-left: 1px; }
.far { margin-left: 7px; }
.sort { gap: 1px; }
.az { display: flex; flex-direction: column; font: 600 10px/10px "Open Sans", sans-serif; color: #3f78b5; }
.az b { font-weight: 600; }
.az i { font-style: normal; color: #8b4fa8; }
.addin { flex-direction: column; justify-content: flex-start; flex: 1; line-height: 15px; padding: 12px 1px 0 0; }
.dot { width: 12px; height: 12px; border-radius: 50%; background: #ff9610; border: 1px solid #ffc57c; margin-bottom: 14px; }

/* formula bar */
.fbar { display: flex; align-items: flex-start; flex: none; padding: 10px 2px 10px; }
.namebox { position: relative; width: 102px; height: 28px; background: #fff; border: 1px solid #c6c6c6; }
.namebox input { width: 80px; height: 26px; padding-left: 6px; color: #444; font-size: 13px; }
.tri { top: 11px; border-width: 4px 4px 0; }
.dots { display: flex; flex-direction: column; gap: 2px; width: 30px; align-items: center; padding-top: 9px; }
.dots i { width: 2px; height: 2px; background: #a6a6a6; }
.fxbox { display: flex; width: 110px; height: 28px; background: #fff; border: 1px solid #c6c6c6; }
.fxbox button { flex: 1; }
.fx { font: italic 700 15px/20px "Liberation Serif", serif; color: #555; }
.fx small { font-size: 12px; }
.formula { display: flex; flex: 1; margin-left: 3px; height: 72px; background: #fff; border: 1px solid #c6c6c6; align-items: flex-start; }
.formula textarea { flex: 1; height: 70px; padding: 3px 10px; resize: none; color: #444; outline: 0; display: block; }
.formula button { padding: 10px 4px 0 0; }

/* grid */
.sheet { display: flex; flex: 1; min-height: 0; border-bottom: 1px solid #9b9b9b; }
.gridwrap { position: relative; flex: 1; overflow: hidden; }
.grid { border-collapse: separate; border-spacing: 0; table-layout: fixed; width: 100%; min-width: 1054px; background: #fff; font: 13px/14px "Liberation Sans", sans-serif; color: #000; }
.k0 { width: 23px; } .kA { width: 87px; } .kB { width: 120px; } .kC { width: 77px; } .kD { width: 123px; }
.kE { width: 106px; } .kF { width: 152px; } .kG { width: 156px; } .kH { width: 95px; }
.grid th, .grid td { height: 17px; padding: 2px 0 0; border-right: 1px solid #d4d4d4; border-bottom: 1px solid #d4d4d4; white-space: nowrap; text-align: right; }
.grid td { padding-right: 6px; }
.grid th { background: #e6e6e6; font-weight: 400; text-align: center; border-color: #bdbdbd; padding-right: 2px; }
.grid tbody th { border-right-color: #9b9b9b; }
.grid thead th { border-bottom-color: #9b9b9b; padding-right: 0; }
.grid th.sel { background: #d2d2d2; color: #217346; }
.grid td:nth-child(2), .grid td:nth-child(3) { text-align: center; padding-right: 0; }
.grid td:last-child { padding-right: 1px; border-right-color: #9b9b9b; }
.grid td.d { padding-right: 20px; }
.grid td.d:last-child { padding-right: 15px; }
.grid .heads td { font-weight: 700; text-align: center; padding-right: 0; }
.corner span { display: block; margin: 0 3px 0 auto; width: 9px; height: 9px; background: linear-gradient(135deg, transparent 50%, #b4b4b4 50%); }
.selection { position: absolute; left: 21px; top: 15px; width: 90px; height: 20px; border: 2px solid #217346; }
.selection::after { content: ""; position: absolute; right: -4px; bottom: -4px; width: 6px; height: 6px; background: #217346; border: 1px solid #fff; border-width: 1px 0 0 1px; }
.redbox { position: absolute; left: 843px; top: 0; width: 96px; bottom: 4px; border: 3px solid #f0231e; border-radius: 3px; }
.vscroll { display: flex; flex-direction: column; flex: none; width: 18px; padding: 2px 0 0 3px; }
.sb { width: 15px; height: 15px; background: #fff; border: 1px solid #8c8c8c; }
.sb span { border: 4px solid transparent; }
.up span { border-bottom-color: #222; border-top: 0; }
.down span { border-top-color: #222; border-bottom: 0; }
.left span { border-right-color: #222; border-left: 0; }
.right span { border-left-color: #222; border-right: 0; }
.vtrack { flex: 1; background: #f0f0f0; }
.vthumb { height: 73%; background: #fff; border: 1px solid #8c8c8c; }

/* sheet tabs */
.tabbar { display: flex; flex: none; height: 28px; border-bottom: 1px solid #c6c6c6; padding-right: 18px; }
.nav { width: 28px; padding-bottom: 2px; }
.prev { margin-left: 12px; }
.nav span { border: 4px solid transparent; }
.prev span { border-right: 5px solid #c0c0c0; border-left: 0; }
.next span { border-left: 5px solid #c0c0c0; border-right: 0; }
.sheettab { margin: -1px 0 3px 29px; padding: 0 12px; font-size: 13px; color: #217346; background: #fff; border: 1px solid #9b9b9b; border-top: 0; border-bottom: 2px solid #217346; }
.addsheet { margin-left: 33px; padding-bottom: 1px; }
.low { margin-left: auto; width: 30px; padding-top: 8px; }
.hscroll { display: flex; width: 393px; padding-top: 6px; margin-left: 1px; }
.htrack { flex: 1; height: 15px; background: #f0f0f0; }
.hthumb { width: 27%; height: 15px; background: #fff; border: 1px solid #8c8c8c; }

/* status bar */
.status { display: flex; flex: none; height: 19px; align-items: center; background: #f3f3f3; padding-right: 18px; }
.ready { margin-left: 8px; }
.macro { margin-left: 20px; }
.acc { margin-left: 18px; }
.views { display: flex; margin-left: auto; height: 19px; }
.view { width: 40px; }
.view.on { border: 0; }
.zb { width: 9px; margin-left: 5px; }
.plus { margin: 0 12px 0 4px; }
.zoom { appearance: none; width: 100px; height: 19px; margin-left: 5px; background: linear-gradient(#444, #444) center / 100% 1px no-repeat; }
.zoom::-webkit-slider-thumb { appearance: none; width: 5px; height: 11px; background: #444; }
```
